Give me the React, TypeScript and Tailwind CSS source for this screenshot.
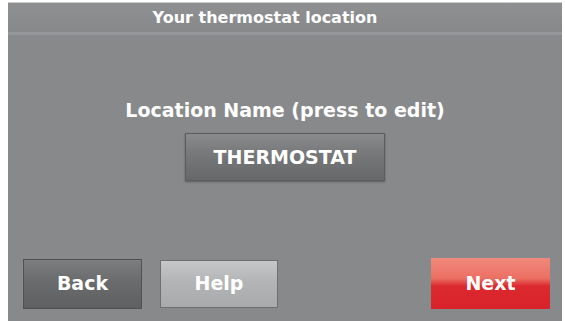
export default function App() {
  const font = { fontFamily: '"DejaVu Sans", "Open Sans", sans-serif' };
  return (
    <div className="w-[565px] h-[321px] bg-white pl-[8px] pt-[2px] pr-[3px]" style={font}>
      <div className="flex h-full flex-col bg-[#88898b] border-t border-[#c9cacc]">
        {/* Title bar — title sits a little left of centre on the device */}
        <div className="flex h-[32px] items-center justify-center border-b-[3px] border-[#96979a] bg-gradient-to-b from-[#8f9092] to-[#87888a] pr-[40px]">
          <span className="text-[16px] font-bold text-white">
            Your thermostat location
          </span>
        </div>

        {/* Body */}
        <div className="flex flex-1 flex-col items-center">
          <p className="mt-[63px] text-[19px] font-bold leading-[24px] text-white">
            Location Name (press to edit)
          </p>
          <button
            type="button"
            className="mt-[11px] flex h-[48px] w-[200px] items-center justify-center border border-[#5c5d5f] bg-gradient-to-b from-[#8a8b8d] via-[#767779] via-45% to-[#67686a] text-[19px] font-bold text-white shadow-[0_1px_2px_rgba(0,0,0,0.35)]"
          >
            THERMOSTAT
          </button>

          <div className="mt-auto mb-[12px] flex w-full items-center pl-[15px] pr-[12px]">
            <button
              type="button"
              className="flex h-[50px] w-[119px] items-center justify-center border border-[#505153] bg-gradient-to-b from-[#7c7d7f] via-[#6a6b6d] via-45% to-[#5f6062] text-[19px] font-bold text-white"
            >
              Back
            </button>
            <button
              type="button"
              className="ml-[18px] flex h-[48px] w-[118px] items-center justify-center border border-[#6e6f71] bg-gradient-to-b from-[#c6c7c9] via-[#b3b4b6] via-45% to-[#a9aaac] text-[19px] font-bold text-white"
            >
              Help
            </button>
            <button
              type="button"
              className="ml-auto flex h-[51px] w-[119px] items-center justify-center bg-[linear-gradient(to_bottom,#f08a7c_0%,#ec6f63_40%,#db2a2f_55%,#d92229_100%)] text-[19px] font-bold text-white"
            >
              Next
            </button>
          </div>
        </div>
      </div>
    </div>
  );
}
